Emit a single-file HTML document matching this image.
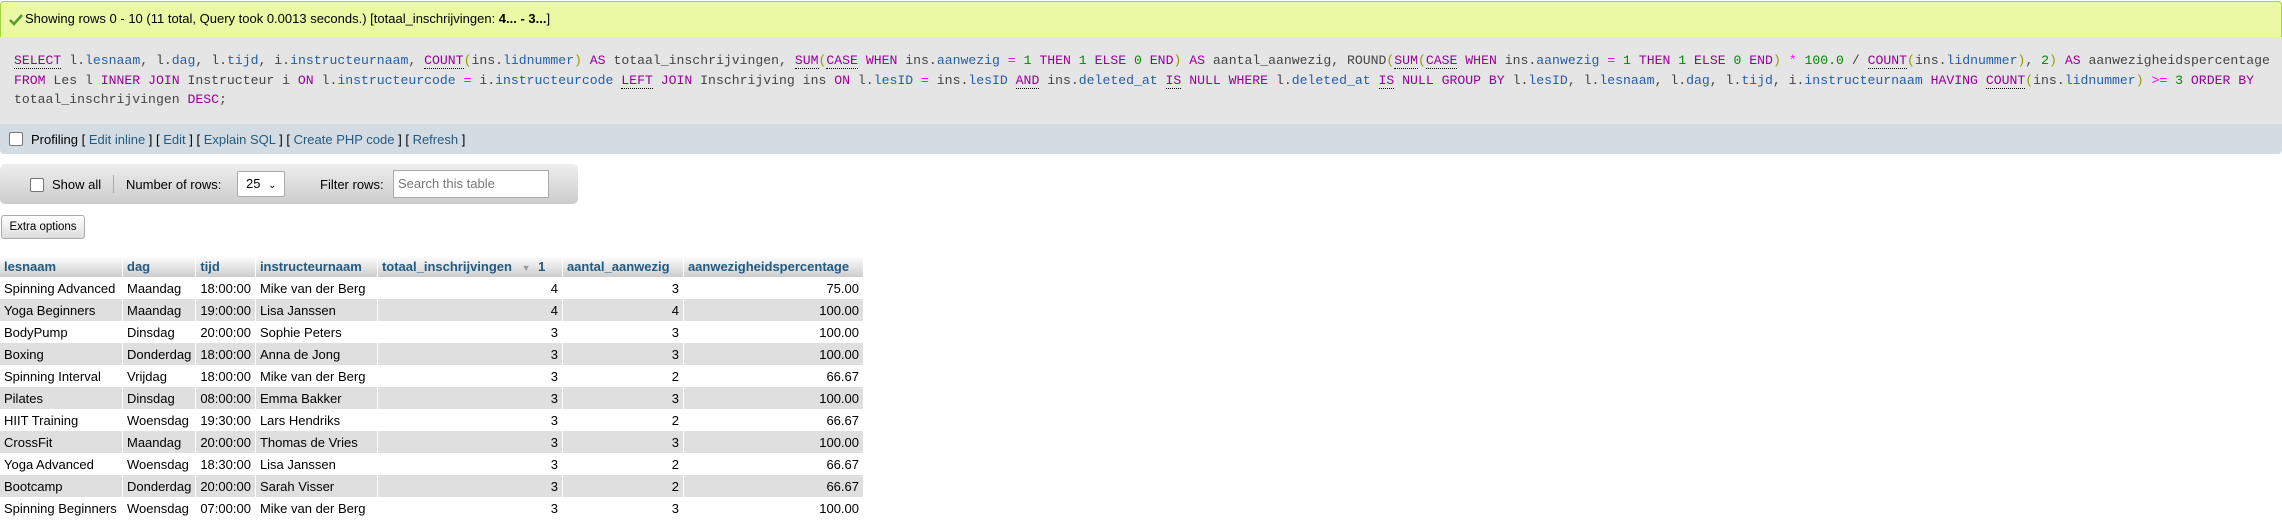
<!DOCTYPE html>
<html><head><meta charset="utf-8"><style>
body{margin:0;width:2282px;height:525px;overflow:hidden;background:#fff;font-family:"Liberation Sans",Arial,sans-serif;font-size:13px;color:#000;position:relative}
.ok{position:absolute;left:0;top:1px;width:2280px;height:35px;background:#ebf8a4;border:1px solid #a2d246;border-radius:4px 4px 0 0}
.ok span{position:absolute;left:24px;top:9px;font-size:13px}
.ok svg{position:absolute;left:8px;top:12px}
.sql{position:absolute;left:0;top:37px;width:2282px;height:87px;background:#e5e5e5}
.sql pre{margin:0;position:absolute;left:14px;top:14px;font-family:"Liberation Mono",monospace;font-size:13.15px;line-height:19.5px;color:#444;white-space:pre}
.k{color:#909}.f{color:#909;border-bottom:1px dotted #000}.i{color:#235eaa}.n{color:#080}.o{color:#f0f}.p{color:#990}
.prof{position:absolute;left:0;top:124px;width:2282px;height:30px;background:#d3dce3;border-radius:0 0 4px 4px}
.prof span{position:absolute;left:31px;top:8px}
a{color:#235a81;text-decoration:none}
.cb{position:absolute;width:12px;height:12px;border:1px solid #767676;border-radius:2px;background:#fff}
.tb{position:absolute;left:0;top:164px;width:578px;height:40px;border-radius:5px;background:linear-gradient(#eee,#ccc)}
.tb .t{position:absolute;top:13px;color:#000;white-space:nowrap}
.sel{position:absolute;left:237px;top:7px;width:38px;height:24px;border:1px solid #aaa;border-radius:2px;background:#fff;padding-left:8px;line-height:24px;white-space:nowrap}
.inp{position:absolute;top:6px;width:150px;height:26px;border:1px solid #aaa;background:#fff;color:#777;line-height:26px;padding-left:4px}
.btn{position:absolute;left:1px;top:215px;width:82px;height:22px;border:1px solid #aaa;border-radius:3px;background:linear-gradient(#fff,#ddd);font-size:11.5px;line-height:22px;text-align:center}
table{position:absolute;left:0;top:256px;border-collapse:collapse;width:864px}
th{height:21px;padding:0 4px;text-align:left;color:#235a81;background:linear-gradient(#fff,#ccc);border-right:1px solid #fff;font-weight:bold;white-space:nowrap}
td{height:22px;padding:0 4px;white-space:nowrap;border-right:1px solid #fff;background:#fff}
tr.g td{background:#dfdfdf}
.r{text-align:right}
</style></head><body>
<div class="ok"><svg width="14" height="12" viewBox="0 0 14 12"><path d="M1 6 L5 10 L13 1" stroke="#5a9c2c" stroke-width="2.6" fill="none"/></svg><span>Showing rows 0 - 10 (11 total, Query took 0.0013 seconds.) [totaal_inschrijvingen: <b>4... - 3...</b>]</span></div>
<div class="sql"><pre><span class="f">SELECT</span> l.<span class="i">lesnaam</span>, l.<span class="i">dag</span>, l.<span class="i">tijd</span>, i.<span class="i">instructeurnaam</span>, <span class="f">COUNT</span><span class="p">(</span>ins.<span class="i">lidnummer</span><span class="p">)</span> <span class="k">AS</span> totaal_inschrijvingen, <span class="f">SUM</span><span class="p">(</span><span class="f">CASE</span> <span class="k">WHEN</span> ins.<span class="i">aanwezig</span> <span class="o">=</span> <span class="n">1</span> <span class="k">THEN</span> <span class="n">1</span> <span class="k">ELSE</span> <span class="n">0</span> <span class="k">END</span><span class="p">)</span> <span class="k">AS</span> aantal_aanwezig, ROUND<span class="p">(</span><span class="f">SUM</span><span class="p">(</span><span class="f">CASE</span> <span class="k">WHEN</span> ins.<span class="i">aanwezig</span> <span class="o">=</span> <span class="n">1</span> <span class="k">THEN</span> <span class="n">1</span> <span class="k">ELSE</span> <span class="n">0</span> <span class="k">END</span><span class="p">)</span> <span class="o">*</span> <span class="n">100.0</span> / <span class="f">COUNT</span><span class="p">(</span>ins.<span class="i">lidnummer</span><span class="p">)</span>, <span class="n">2</span><span class="p">)</span> <span class="k">AS</span> aanwezigheidspercentage
<span class="k">FROM</span> Les l <span class="k">INNER JOIN</span> Instructeur i <span class="k">ON</span> l.<span class="i">instructeurcode</span> <span class="o">=</span> i.<span class="i">instructeurcode</span> <span class="f">LEFT</span> <span class="k">JOIN</span> Inschrijving ins <span class="k">ON</span> l.<span class="i">lesID</span> <span class="o">=</span> ins.<span class="i">lesID</span> <span class="f">AND</span> ins.<span class="i">deleted_at</span> <span class="f">IS</span> <span class="k">NULL</span> <span class="k">WHERE</span> l.<span class="i">deleted_at</span> <span class="f">IS</span> <span class="k">NULL</span> <span class="k">GROUP BY</span> l.<span class="i">lesID</span>, l.<span class="i">lesnaam</span>, l.<span class="i">dag</span>, l.<span class="i">tijd</span>, i.<span class="i">instructeurnaam</span> <span class="k">HAVING</span> <span class="f">COUNT</span><span class="p">(</span>ins.<span class="i">lidnummer</span><span class="p">)</span> <span class="o">&gt;=</span> <span class="n">3</span> <span class="k">ORDER BY</span>
totaal_inschrijvingen <span class="k">DESC</span>;</pre></div>
<div class="prof"><div class="cb" style="left:9px;top:8px"></div><span>Profiling [ <a>Edit inline</a> ] [ <a>Edit</a> ] [ <a>Explain SQL</a> ] [ <a>Create PHP code</a> ] [ <a>Refresh</a> ]</span></div>
<div class="tb"><div class="cb" style="left:30px;top:14px"></div><span class="t" style="left:52px">Show all</span><div style="position:absolute;left:113px;top:11px;width:1px;height:18px;background:#aaa"></div><span class="t" style="left:126px">Number of rows:</span><div class="sel">25 <span style="font-size:10px;margin-left:4px">&#8964;</span></div><span class="t" style="left:320px">Filter rows:</span><div class="inp" style="left:393px">Search this table</div></div>
<div class="btn">Extra options</div>
<table>
<tr><th style="width:114px">lesnaam</th><th style="width:63px">dag</th><th style="width:49px">tijd</th><th style="width:113px">instructeurnaam</th><th style="width:176px">totaal_inschrijvingen <span style="color:#999;font-size:9px;margin-left:6px">&#9660;</span> <span style="margin-left:4px">1</span></th><th style="width:112px">aantal_aanwezig</th><th>aanwezigheidspercentage</th></tr>
<tr><td>Spinning Advanced</td><td>Maandag</td><td>18:00:00</td><td>Mike van der Berg</td><td class="r">4</td><td class="r">3</td><td class="r">75.00</td></tr>
<tr class="g"><td>Yoga Beginners</td><td>Maandag</td><td>19:00:00</td><td>Lisa Janssen</td><td class="r">4</td><td class="r">4</td><td class="r">100.00</td></tr>
<tr><td>BodyPump</td><td>Dinsdag</td><td>20:00:00</td><td>Sophie Peters</td><td class="r">3</td><td class="r">3</td><td class="r">100.00</td></tr>
<tr class="g"><td>Boxing</td><td>Donderdag</td><td>18:00:00</td><td>Anna de Jong</td><td class="r">3</td><td class="r">3</td><td class="r">100.00</td></tr>
<tr><td>Spinning Interval</td><td>Vrijdag</td><td>18:00:00</td><td>Mike van der Berg</td><td class="r">3</td><td class="r">2</td><td class="r">66.67</td></tr>
<tr class="g"><td>Pilates</td><td>Dinsdag</td><td>08:00:00</td><td>Emma Bakker</td><td class="r">3</td><td class="r">3</td><td class="r">100.00</td></tr>
<tr><td>HIIT Training</td><td>Woensdag</td><td>19:30:00</td><td>Lars Hendriks</td><td class="r">3</td><td class="r">2</td><td class="r">66.67</td></tr>
<tr class="g"><td>CrossFit</td><td>Maandag</td><td>20:00:00</td><td>Thomas de Vries</td><td class="r">3</td><td class="r">3</td><td class="r">100.00</td></tr>
<tr><td>Yoga Advanced</td><td>Woensdag</td><td>18:30:00</td><td>Lisa Janssen</td><td class="r">3</td><td class="r">2</td><td class="r">66.67</td></tr>
<tr class="g"><td>Bootcamp</td><td>Donderdag</td><td>20:00:00</td><td>Sarah Visser</td><td class="r">3</td><td class="r">2</td><td class="r">66.67</td></tr>
<tr><td>Spinning Beginners</td><td>Woensdag</td><td>07:00:00</td><td>Mike van der Berg</td><td class="r">3</td><td class="r">3</td><td class="r">100.00</td></tr>
</table>
</body></html>
